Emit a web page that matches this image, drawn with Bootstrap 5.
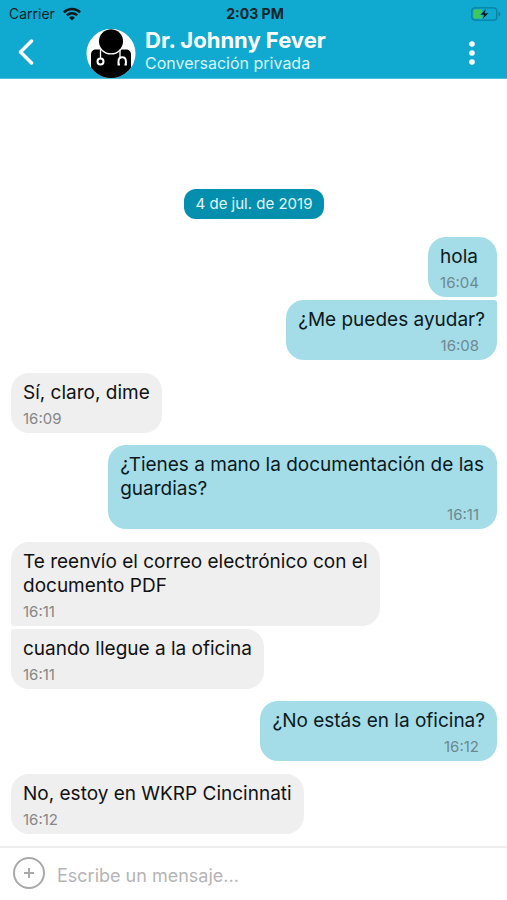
<!DOCTYPE html>
<html lang="es">
<head>
<meta charset="utf-8">
<meta name="viewport" content="width=device-width, initial-scale=1">
<title>Dr. Johnny Fever</title>
<link href="https://cdn.jsdelivr.net/npm/bootstrap@5.3.0/dist/css/bootstrap.min.css" rel="stylesheet">
<style>
  body { font-family: Inter, "Liberation Sans", sans-serif; color: #111; background: #fff; }
  .chat-top { background: #10aad0; border-bottom: 1px solid #4cc0dc; }
  .status-bar { height: 28px; padding: 0 6px 0 9px; font-size: 14px; line-height: 28px; color: #10232b; grid-template-columns: 1fr auto 1fr; }
  .title-bar { height: 50px; padding: 0 25px 0 16px; }
  .icon-btn { width: 20px; height: 40px; padding: 0; border: 0; line-height: 1; }
  .back-gap { margin-right: 50px; }
  .peer { padding: 0 0 5px 9px; }
  .peer-name { font-size: 22px; line-height: 24px; color: #fff; }
  .peer-sub { font-size: 16px; line-height: 22px; color: #d9f4fb; }
  .messages { padding: 0 10px 12px 11px; }
  .day-pill { background: #058fae; color: #e2f6fa; font-size: 15px; line-height: 30px; padding: 0 12px; border-radius: 12px; margin-bottom: 6px; }
  .bubble { padding: 8px 12px 4px; border-radius: 18px; font-size: 19px; line-height: 24px; }
  .bubble time { display: block; margin-top: 4px; font-size: 15px; line-height: 20px; }
  .bubble-in { align-self: flex-start; max-width: 76%; margin-top: 13px; background: #efefef; }
  .bubble-in time { color: #868686; }
  .bubble-out { align-self: flex-end; max-width: 80%; margin-top: 12px; background: #a4dde8; color: #0b191d; }
  .bubble-out time { color: #6d8990; text-align: right; padding-right: 6px; }
  .follows { margin-top: 3px; }
  .bubble-in.has-next { border-bottom-left-radius: 3px; }
  .bubble-in.follows { border-top-left-radius: 3px; }
  .bubble-out.has-next { border-bottom-right-radius: 3px; }
  .bubble-out.follows { border-top-right-radius: 3px; }
  .composer { height: 54px; border-top: 2px solid #ededed; padding: 0 12px 2px; gap: 11px; }
  .attach { width: 34px; height: 34px; }
  .composer .form-control { font-size: 18px; line-height: 24px; padding: 6px 0 0; }
  .composer .form-control::placeholder { color: #b5b5b5; }
</style>
<script src="https://cdn.jsdelivr.net/npm/bootstrap@5.3.0/dist/js/bootstrap.bundle.min.js"></script>
</head>
<body>
<div class="d-flex flex-column min-vh-100">
  <header class="chat-top">
    <div class="status-bar d-grid align-items-center">
      <div class="d-flex align-items-center gap-2">
        <span>Carrier</span>
        <svg width="18" height="14" viewBox="0 0 18 14" fill="none" stroke="#10181c" stroke-width="2.4" aria-hidden="true">
          <path d="M.9 5.3a11.5 11.5 0 0 1 16.2 0M3.9 8.4a7.2 7.2 0 0 1 10.2 0"/>
          <path d="M6.1 10.7a4.1 4.1 0 0 1 5.8 0L9 13.6z" fill="#10181c" stroke="none"/>
        </svg>
      </div>
      <span class="fw-bold">2:03 PM</span>
      <svg class="ms-auto" width="30" height="14" viewBox="0 0 30 14" aria-hidden="true">
        <rect x=".8" y=".8" width="25" height="12.4" rx="3.2" fill="none" stroke="#087e9d" stroke-width="1.3"/>
        <rect x="2.4" y="2.4" width="9" height="9.2" rx="1.5" fill="#3fc95c"/>
        <path d="M27.5 4.5c2.4.9 2.4 4.1 0 5z" fill="#087e9d"/>
        <path d="M15.5 1 8.9 8h3.7l-1.5 5 6.8-7h-3.800z" fill="#07171d" stroke="#10aad0" stroke-width=".7"/>
      </svg>
    </div>
    <div class="title-bar d-flex align-items-center">
      <button type="button" class="btn icon-btn back-gap" aria-label="Volver">
        <svg width="20" height="28" viewBox="0 0 20 28" fill="none" stroke="#fff" stroke-width="3.5" stroke-linecap="round" stroke-linejoin="round" aria-hidden="true"><path d="M15.5 2 4.5 13l11 11"/></svg>
      </button>
      <svg class="flex-shrink-0" width="50" height="50" viewBox="0 0 50 50" role="img" aria-label="Dr. Johnny Fever">
        <defs><clipPath id="disc"><circle cx="25" cy="25.5" r="24.5"/></clipPath></defs>
        <circle cx="25" cy="25.5" r="24.5" fill="#fff"/>
        <g clip-path="url(#disc)">
          <path d="M5 50V26.5c0-3 2-5 5-5h30c3 0 5 2 5 5V50z" fill="#000"/>
          <circle cx="25" cy="13.3" r="13.3" fill="#fff"/>
          <circle cx="25" cy="13.3" r="12" fill="#000"/>
          <g fill="none" stroke="#fff">
            <path d="M14.5 21.5V30M34 21.5v8" stroke-width="1.3"/>
            <circle cx="14.5" cy="33.5" r="3" stroke-width="2"/>
            <path d="M34 36.5h-1.5V33.5c0-2.5 1.5-4.2 3.7-4.2s3.7 1.7 3.7 4.2v3H38.5" stroke-width="2"/>
          </g>
        </g>
      </svg>
      <div class="peer flex-grow-1">
        <h1 class="peer-name fw-bold mb-0">Dr. Johnny Fever</h1>
        <div class="peer-sub">Conversación privada</div>
      </div>
      <button type="button" class="btn icon-btn" aria-label="Más opciones">
        <svg width="20" height="26" viewBox="0 0 20 26" fill="#fff" aria-hidden="true"><circle cx="10" cy="4" r="2.8"/><circle cx="10" cy="13" r="2.8"/><circle cx="10" cy="22" r="2.8"/></svg>
      </button>
    </div>
  </header>

  <main class="messages flex-grow-1 d-flex flex-column justify-content-end">
    <div class="day-pill align-self-center">4 de jul. de 2019</div>
    <div class="bubble bubble-out has-next">hola<time>16:04</time></div>
    <div class="bubble bubble-out follows">¿Me puedes ayudar?<time>16:08</time></div>
    <div class="bubble bubble-in">Sí, claro, dime<time>16:09</time></div>
    <div class="bubble bubble-out">¿Tienes a mano la documentación de las guardias?<time>16:11</time></div>
    <div class="bubble bubble-in has-next">Te reenvío el correo electrónico con el documento PDF<time>16:11</time></div>
    <div class="bubble bubble-in follows">cuando llegue a la oficina<time>16:11</time></div>
    <div class="bubble bubble-out">¿No estás en la oficina?<time>16:12</time></div>
    <div class="bubble bubble-in">No, estoy en WKRP Cincinnati<time>16:12</time></div>
  </main>

  <form class="composer d-flex align-items-center">
    <button type="button" class="btn attach p-0 border-0 d-flex flex-shrink-0" aria-label="Adjuntar">
      <svg width="34" height="34" viewBox="0 0 34 34" fill="none" stroke="#a9a9a9" stroke-width="2" aria-hidden="true"><circle cx="17" cy="17" r="15"/><path d="M17 12v10M12 17h10"/></svg>
    </button>
    <input type="text" class="form-control border-0 shadow-none bg-transparent" placeholder="Escribe un mensaje..." aria-label="Escribe un mensaje">
  </form>
</div>
</body>
</html>
